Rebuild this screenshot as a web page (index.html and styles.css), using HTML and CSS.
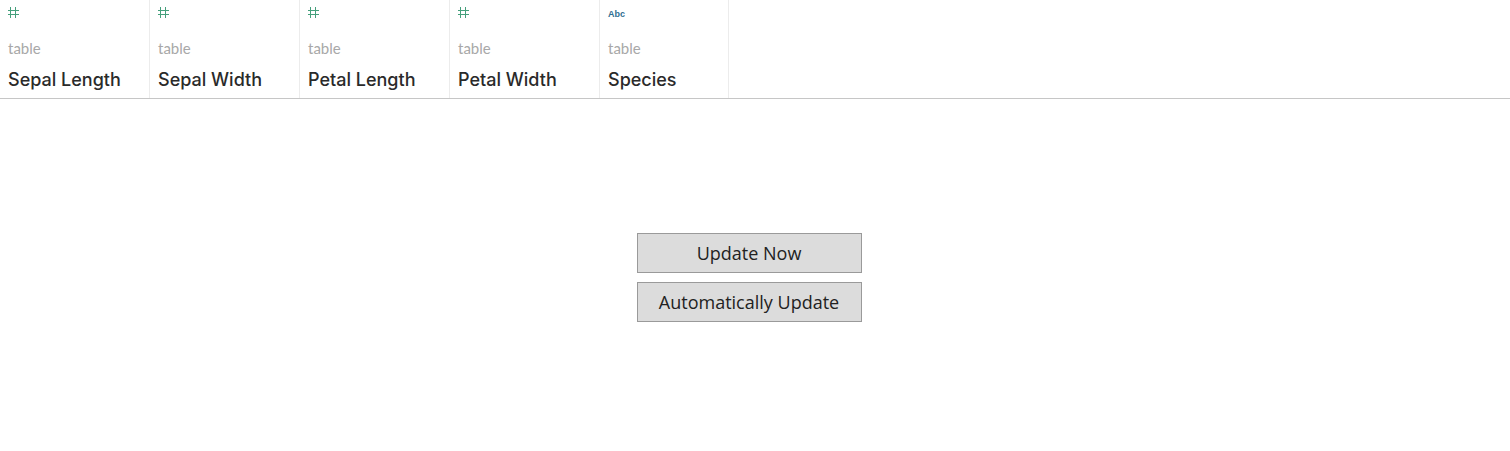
FILE: index.html
```html
<!DOCTYPE html>
<html>
<head>
<meta charset="utf-8">
<link rel="stylesheet" href="styles.css">
</head>
<body>
<div class="header">
  <div class="col">
    <div class="type"><svg width="11" height="11" viewBox="0 0 11 11" shape-rendering="crispEdges"><path d="M2.5 0V11M7.5 0V11M0 3.5H11M0 7.5H11" stroke="#45a07c" stroke-width="1" fill="none"/></svg></div>
    <div class="src">table</div>
    <div class="name">Sepal Length</div>
  </div>
  <div class="col">
    <div class="type"><svg width="11" height="11" viewBox="0 0 11 11" shape-rendering="crispEdges"><path d="M2.5 0V11M7.5 0V11M0 3.5H11M0 7.5H11" stroke="#45a07c" stroke-width="1" fill="none"/></svg></div>
    <div class="src">table</div>
    <div class="name">Sepal Width</div>
  </div>
  <div class="col">
    <div class="type"><svg width="11" height="11" viewBox="0 0 11 11" shape-rendering="crispEdges"><path d="M2.5 0V11M7.5 0V11M0 3.5H11M0 7.5H11" stroke="#45a07c" stroke-width="1" fill="none"/></svg></div>
    <div class="src">table</div>
    <div class="name">Petal Length</div>
  </div>
  <div class="col">
    <div class="type"><svg width="11" height="11" viewBox="0 0 11 11" shape-rendering="crispEdges"><path d="M2.5 0V11M7.5 0V11M0 3.5H11M0 7.5H11" stroke="#45a07c" stroke-width="1" fill="none"/></svg></div>
    <div class="src">table</div>
    <div class="name">Petal Width</div>
  </div>
  <div class="col last">
    <div class="type abc">Abc</div>
    <div class="src">table</div>
    <div class="name">Species</div>
  </div>
</div>
<div class="main">
  <button class="btn">Update Now</button>
  <button class="btn">Automatically Update</button>
</div>
</body>
</html>
```
FILE: styles.css
```css
html, body {
  margin: 0;
  padding: 0;
  background: #fff;
}
body {
  width: 1510px;
  height: 451px;
  overflow: hidden;
  font-family: "Lato", "Liberation Sans", sans-serif;
}
.header {
  display: flex;
  height: 98px;
  border-bottom: 1px solid #c6c6c6;
}
.col {
  border-right: 1px solid #ececec;
  padding-left: 8px;
  width: 141px;
  display: flex;
  flex-direction: column;
}
.col.last {
  width: 120px;
}
.type {
  height: 11px;
  margin-top: 7px;
  display: flex;
  align-items: center;
}
.type svg { display: block; }
.abc {
  font-family: "Liberation Sans", sans-serif;
  font-size: 9px;
  font-weight: bold;
  color: #2f6f92;
  height: 10px;
  margin-top: 9px;
  margin-bottom: -1px;
}
.src {
  margin-top: 22px;
  font-size: 15px;
  line-height: 16px;
  color: #a8a8a8;
}
.name {
  margin-top: 13px;
  font-family: "Inter", "Lato", sans-serif;
  font-size: 18px;
  line-height: 22px;
  font-weight: 500;
  color: #2a2a2a;
}
.main {
  display: flex;
  flex-direction: column;
  align-items: center;
  padding-top: 134px;
  padding-right: 12px;
  gap: 9px;
}
.btn {
  width: 225px;
  height: 40px;
  background: #dcdcdc;
  border: 1px solid #9a9a9a;
  border-radius: 0;
  font-family: "Open Sans", "Liberation Sans", sans-serif;
  font-size: 18px;
  color: #222;
  padding: 0;
  margin: 0;
}
```
